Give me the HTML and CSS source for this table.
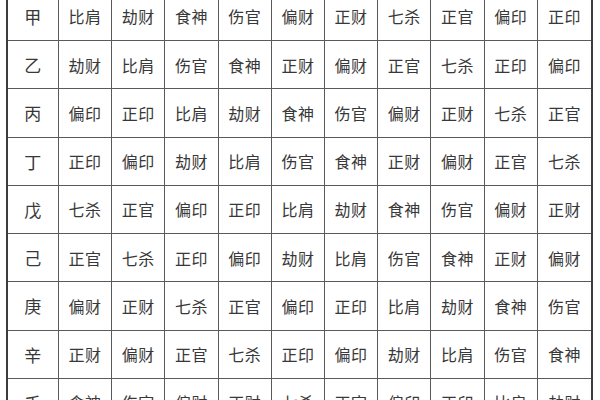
FILE: index.html
```html
<!DOCTYPE html>
<html lang="zh-CN">
<head>
<meta charset="utf-8">
<title>十神表</title>
<link rel="stylesheet" href="styles.css">
</head>
<body>
<div class="page">
  <div class="grid">
    <div class="c h">甲</div><div class="c">比肩</div><div class="c">劫财</div><div class="c">食神</div><div class="c">伤官</div><div class="c">偏财</div><div class="c">正财</div><div class="c">七杀</div><div class="c">正官</div><div class="c">偏印</div><div class="c last">正印</div>
    <div class="c h">乙</div><div class="c">劫财</div><div class="c">比肩</div><div class="c">伤官</div><div class="c">食神</div><div class="c">正财</div><div class="c">偏财</div><div class="c">正官</div><div class="c">七杀</div><div class="c">正印</div><div class="c last">偏印</div>
    <div class="c h">丙</div><div class="c">偏印</div><div class="c">正印</div><div class="c">比肩</div><div class="c">劫财</div><div class="c">食神</div><div class="c">伤官</div><div class="c">偏财</div><div class="c">正财</div><div class="c">七杀</div><div class="c last">正官</div>
    <div class="c h">丁</div><div class="c">正印</div><div class="c">偏印</div><div class="c">劫财</div><div class="c">比肩</div><div class="c">伤官</div><div class="c">食神</div><div class="c">正财</div><div class="c">偏财</div><div class="c">正官</div><div class="c last">七杀</div>
    <div class="c h">戊</div><div class="c">七杀</div><div class="c">正官</div><div class="c">偏印</div><div class="c">正印</div><div class="c">比肩</div><div class="c">劫财</div><div class="c">食神</div><div class="c">伤官</div><div class="c">偏财</div><div class="c last">正财</div>
    <div class="c h">己</div><div class="c">正官</div><div class="c">七杀</div><div class="c">正印</div><div class="c">偏印</div><div class="c">劫财</div><div class="c">比肩</div><div class="c">伤官</div><div class="c">食神</div><div class="c">正财</div><div class="c last">偏财</div>
    <div class="c h">庚</div><div class="c">偏财</div><div class="c">正财</div><div class="c">七杀</div><div class="c">正官</div><div class="c">偏印</div><div class="c">正印</div><div class="c">比肩</div><div class="c">劫财</div><div class="c">食神</div><div class="c last">伤官</div>
    <div class="c h">辛</div><div class="c">正财</div><div class="c">偏财</div><div class="c">正官</div><div class="c">七杀</div><div class="c">正印</div><div class="c">偏印</div><div class="c">劫财</div><div class="c">比肩</div><div class="c">伤官</div><div class="c last">食神</div>
    <div class="c h">壬</div><div class="c">食神</div><div class="c">伤官</div><div class="c">偏财</div><div class="c">正财</div><div class="c">七杀</div><div class="c">正官</div><div class="c">偏印</div><div class="c">正印</div><div class="c">比肩</div><div class="c last">劫财</div>
  </div>
</div>
</body>
</html>
```
FILE: styles.css
```css
html, body {
  margin: 0;
  padding: 0;
  background: #ffffff;
}
.page {
  width: 600px;
  height: 400px;
  overflow: hidden;
  padding-left: 6px;
  box-sizing: border-box;
}
.grid {
  margin-top: -7.25px;
  width: 587px;
  box-sizing: border-box;
  border-left: 2px solid #3c3c3c;
  border-right: 2px solid #3c3c3c;
  display: grid;
  grid-template-columns: 51px repeat(10, 1fr);
  grid-auto-rows: 48.25px;
  font-family: "Noto Sans CJK SC", "Noto Sans CJK JP", sans-serif;
  font-size: 16px;
  color: #383838;
}
.c {
  box-sizing: border-box;
  border-right: 1px solid #5a5a5a;
  border-bottom: 1px solid #5a5a5a;
  display: flex;
  align-items: center;
  justify-content: center;
  line-height: 1;
  letter-spacing: 0.5px;
}
.c.last {
  border-right: none;
}
.c.h {
  font-size: 17px;
}
```
